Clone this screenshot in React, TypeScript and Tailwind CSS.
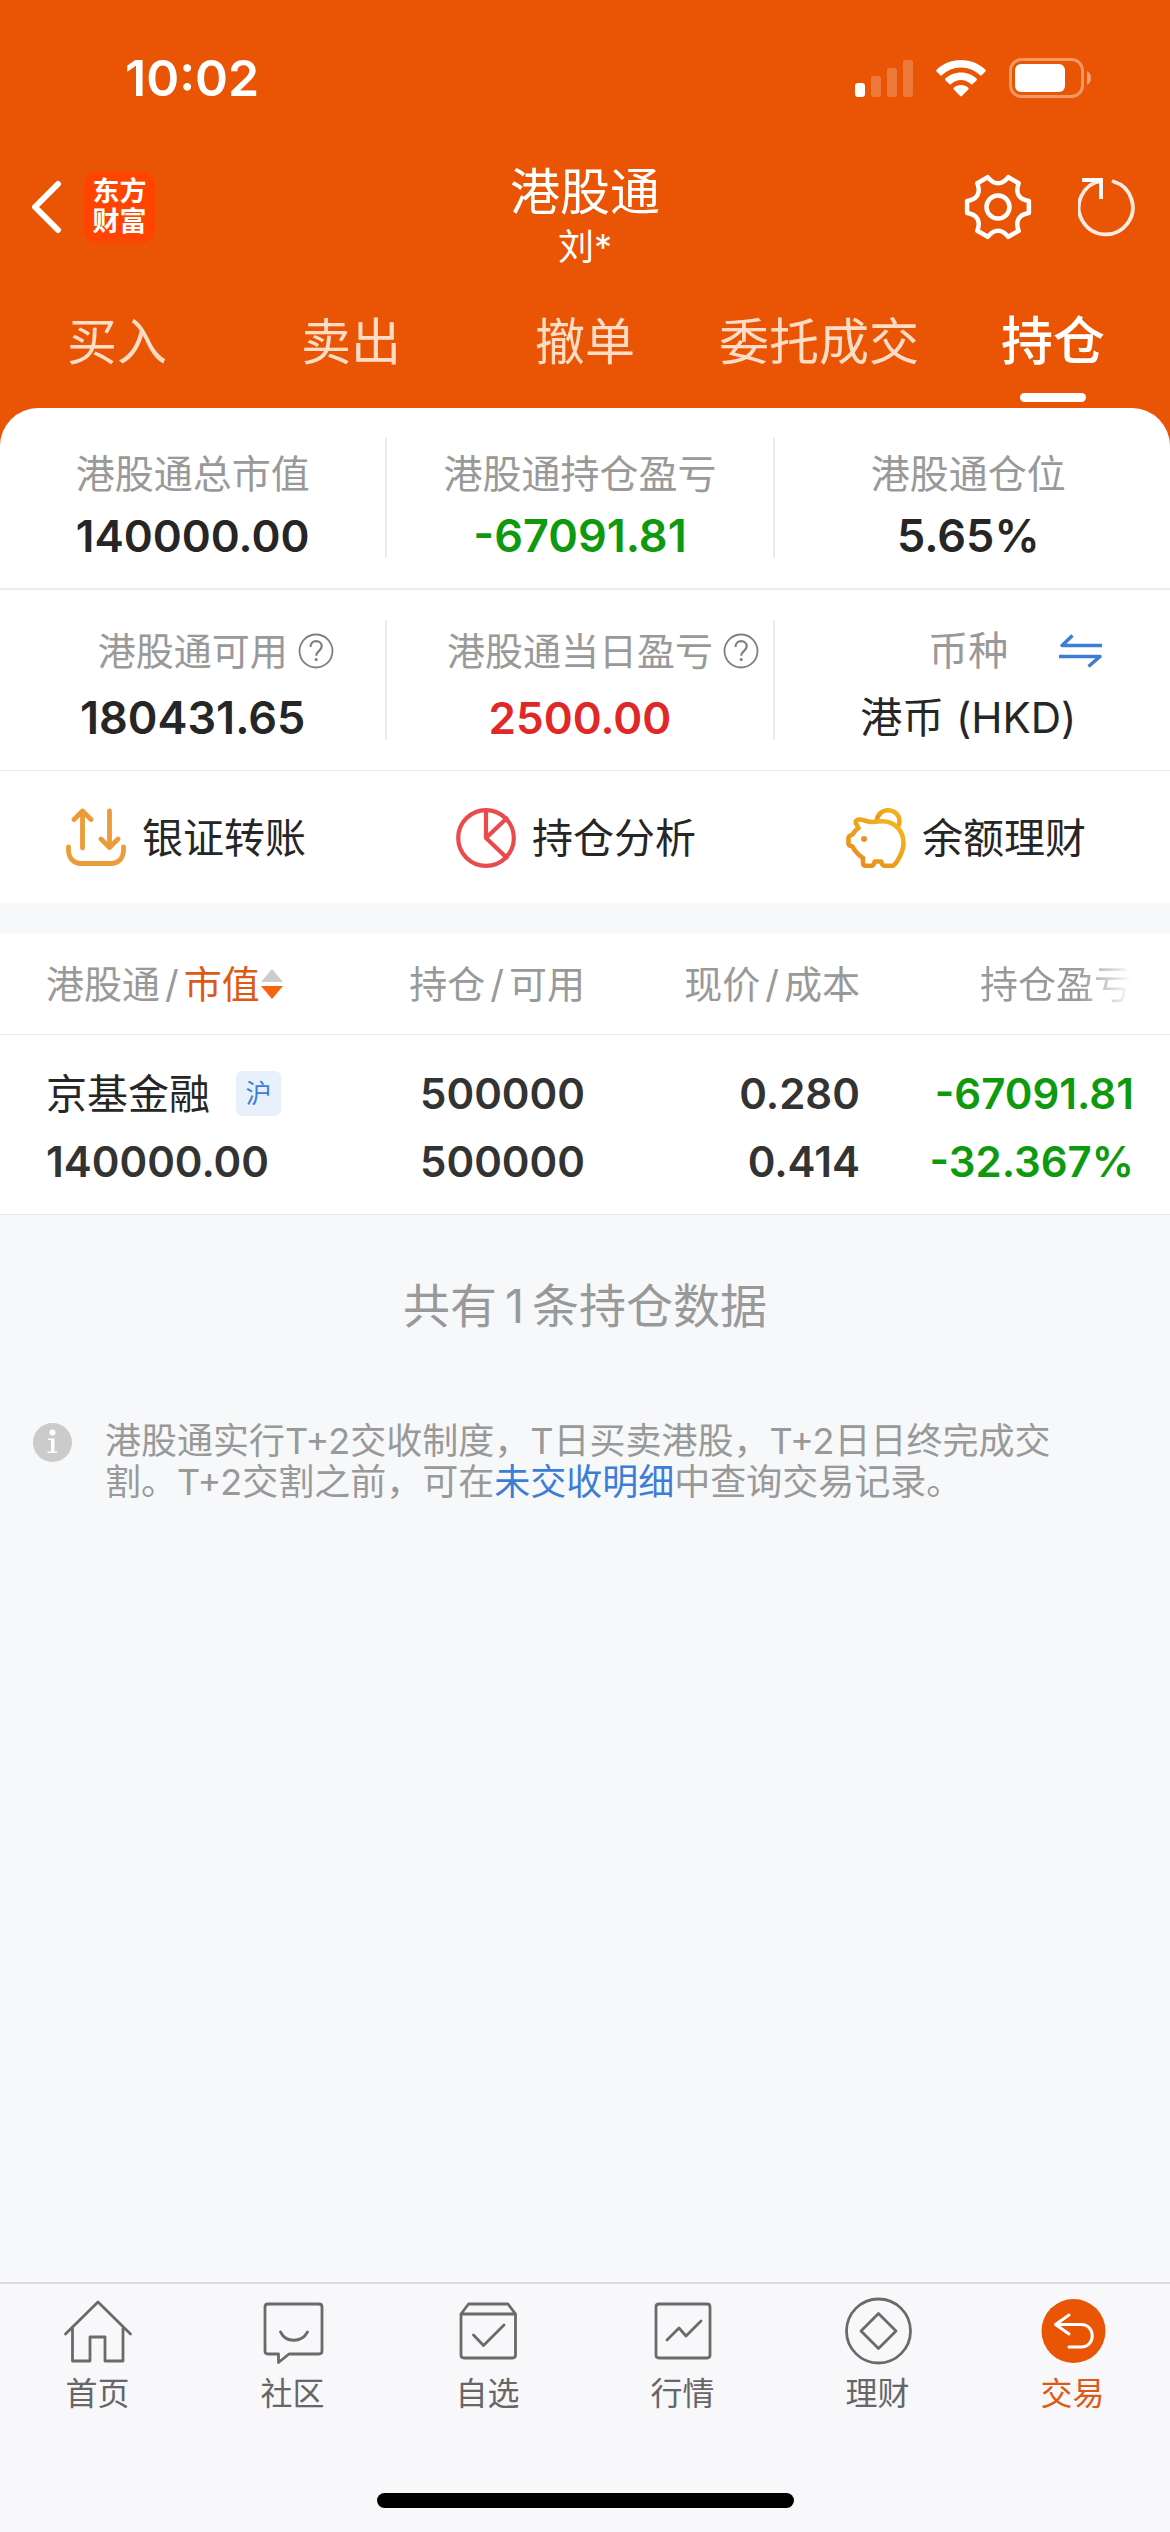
import { useState } from "react";
import type { ReactNode } from "react";

const tabs = ["买入", "卖出", "撤单", "委托成交", "持仓"];

const holdings = [
  {
    name: "京基金融",
    market: "沪",
    value: "140000.00",
    amount: "500000",
    available: "500000",
    price: "0.280",
    cost: "0.414",
    profit: "-67091.81",
    profitRate: "-32.367%",
  },
];

// Six-tooth outline for the settings icon
function gearPath(c: number, outer: number, inner: number) {
  const at = (deg: number, r: number) => {
    const a = (deg * Math.PI) / 180;
    return `${(c + r * Math.cos(a)).toFixed(1)} ${(c + r * Math.sin(a)).toFixed(1)}`;
  };
  let d = `M${at(-11, outer)}`;
  for (let i = 0; i < 6; i++) {
    const t = i * 60;
    d += `L${at(t - 11, outer)}L${at(t + 11, outer)}C${at(t + 20, inner)} ${at(t + 40, inner)} ${at(t + 49, outer)}`;
  }
  return d + "Z";
}

function StatusBar() {
  return (
    <div className="flex h-[156px] items-center justify-between pl-[125px] pr-[78px]">
      <span className="text-[50px] font-semibold leading-[60px]">10:02</span>
      <div className="flex items-center gap-[23px]">
        <svg width="58" height="38" viewBox="0 0 58 38" fill="#fff">
          <rect x="0" y="24" width="10" height="14" rx="3" />
          <g opacity="0.22">
            <rect x="16" y="17" width="10" height="21" rx="3" />
            <rect x="32" y="9" width="10" height="29" rx="3" />
            <rect x="48" y="1" width="10" height="37" rx="3" />
          </g>
        </svg>
        <svg width="50" height="38" viewBox="0 0 50 38" fill="#fff">
          <path d="M25 1C15.500 1 6.800 4.700 .6 10.700c-.5.500-.5 1.200 0 1.700l3.700 3.800c.5.500 1.200.5 1.700 0C11 11.400 17.700 8.500 25 8.500s14 2.900 19 7.700c.5.500 1.200.5 1.700 0l3.700-3.800c.5-.5.5-1.200 0-1.700C43.200 4.700 34.500 1 25 1Z" />
          <path d="M25 13.500c-6 0-11.500 2.300-15.600 6.100-.5.500-.5 1.200 0 1.700l3.800 3.800c.5.500 1.200.5 1.700.1C17.600 22.700 21.100 21 25 21s7.400 1.700 10.100 4.200c.5.400 1.200.4 1.700-.1l3.800-3.800c.5-.5.5-1.200 0-1.700C36.500 15.800 31 13.500 25 13.500Z" />
          <path d="M25 26c-2.800 0-5.300 1-7.200 2.700-.5.500-.5 1.200 0 1.700l6.400 6.600c.5.500 1.200.5 1.700 0l6.400-6.600c.5-.5.5-1.200 0-1.700C30.300 27 27.800 26 25 26Z" />
        </svg>
        <svg width="83" height="40" viewBox="0 0 83 40">
          <rect x="1.500" y="1.500" width="72" height="37" rx="11" fill="none" stroke="#fff" strokeOpacity="0.4" strokeWidth="3" />
          <rect x="6" y="6" width="50" height="28" rx="6" fill="#fff" />
          <path d="M78 13c2.500 1.200 4 4 4 7s-1.500 5.800-4 7V13Z" fill="#fff" fillOpacity="0.45" />
        </svg>
      </div>
    </div>
  );
}

function TitleBar() {
  return (
    <div className="grid grid-cols-[1fr_auto_1fr] items-start">
      <div className="flex h-[102px] items-center gap-[22px] pl-[31px]">
        <button aria-label="返回">
          <svg width="31" height="54" viewBox="0 0 31 54" fill="none" stroke="#fff" strokeWidth="6" strokeLinecap="round" strokeLinejoin="round">
            <path d="M27 4 4 27l23 23" />
          </svg>
        </button>
        <div className="flex h-[71px] w-[71px] flex-col items-center justify-center rounded-[14px] bg-[#ff4400] text-[27px] font-bold leading-[30px]">
          <span>东方</span>
          <span>财富</span>
        </div>
      </div>
      <div className="flex flex-col items-center pt-2">
        <h1 className="text-[50px] leading-[56px]">港股通</h1>
        <span className="text-[36px] leading-[54px]">刘*</span>
      </div>
      <div className="flex h-[102px] items-center justify-end gap-[46px] pr-[32px]">
        <button aria-label="设置">
          <svg width="68" height="68" viewBox="0 0 68 68" fill="none" stroke="#fff" strokeWidth="4.500" strokeLinejoin="round">
            <path d={gearPath(34, 31.5, 22)} />
            <circle cx="34" cy="34" r="11.500" />
          </svg>
        </button>
        <button aria-label="刷新">
          <svg width="60" height="60" viewBox="0 0 60 60" fill="none" stroke="#fff" strokeWidth="3.800" strokeLinecap="round">
            <path d="M35.500 4.500A27 27 0 1 1 23 3.800" strokeOpacity="0.88" />
            <path d="M6 3h17v17" strokeLinecap="square" />
          </svg>
        </button>
      </div>
    </div>
  );
}

function TradeTabs() {
  const [active, setActive] = useState("持仓");
  return (
    <nav className="grid grid-cols-5">
      {tabs.map((tab) => (
        <button
          key={tab}
          onClick={() => setActive(tab)}
          className="flex flex-col items-center gap-[21px] whitespace-nowrap pb-[6px] pt-[38px]"
        >
          <span
            className={
              tab === active
                ? "text-[52px] font-medium leading-[60px]"
                : "text-[50px] leading-[60px] text-[#fedcc6]"
            }
          >
            {tab}
          </span>
          <span className={tab === active ? "h-[9px] w-[66px] rounded-full bg-white" : "h-[9px] w-[66px]"} />
        </button>
      ))}
    </nav>
  );
}

function HelpButton() {
  return (
    <button aria-label="说明" className="ml-[10px] justify-self-start">
      <svg width="36" height="36" viewBox="0 0 36 36" fill="none" stroke="#808080" strokeWidth="1.800">
        <circle cx="18" cy="18" r="16.500" />
        <path d="M12.500 14c0-3.600 2.300-5.900 5.600-5.900 3.200 0 5.600 2 5.600 5.100 0 4.500-5.500 4.800-5.500 9.600" strokeWidth="2.200" />
        <circle cx="18.200" cy="26.500" r="1.600" fill="#808080" stroke="none" />
      </svg>
    </button>
  );
}

function Stat({ label, value, labelStyle, valueStyle, extra, last }: {
  label: string;
  value: string;
  labelStyle: string;
  valueStyle: string;
  extra?: ReactNode;
  last?: boolean;
}) {
  return (
    <div className={last ? "h-[120px]" : "h-[120px] border-r-2 border-[#ebebeb]"}>
      {/* equal side tracks keep the label centred with or without an icon */}
      <div className={`grid grid-cols-[1fr_auto_1fr] items-center whitespace-nowrap leading-[60px] text-[#999] ${labelStyle}`}>
        <span className="col-start-2">{label}</span>
        {extra}
      </div>
      <p className={`text-center leading-[52px] ${valueStyle}`}>{value}</p>
    </div>
  );
}

const topLabel = "h-[72px] text-[39px]";
const subLabel = "mb-[11px] h-[61px] text-[38px]";

function Summary() {
  return (
    <section className="rounded-t-[38px] bg-white">
      <div className="grid grid-cols-3 border-b-2 border-[#ebebeb] pb-[30px] pr-2 pt-[30px]">
        <Stat label="港股通总市值" value="140000.00" labelStyle={topLabel} valueStyle="text-[44px] font-semibold text-[#262626]" />
        <Stat label="港股通持仓盈亏" value="-67091.81" labelStyle={topLabel} valueStyle="text-[45px] font-semibold text-[#0e990e]" />
        <Stat label="港股通仓位" value="5.65%" labelStyle={topLabel} valueStyle="text-[45px] font-semibold text-[#262626]" last />
      </div>
      <div className="grid grid-cols-3 border-b border-[#ebebeb] pb-[30px] pr-2 pt-[30px]">
        <Stat label="港股通可用" value="180431.65" labelStyle={subLabel} valueStyle="text-[45px] font-semibold text-[#262626]" extra={<HelpButton />} />
        <Stat label="港股通当日盈亏" value="2500.00" labelStyle={subLabel} valueStyle="text-[44px] font-semibold text-[#e12828]" extra={<HelpButton />} />
        <Stat
          label="币种"
          value="港币 (HKD)"
          labelStyle="mb-[11px] h-[61px] text-[40px]"
          valueStyle="text-[42px] text-[#262626]"
          last
          extra={
            <button aria-label="切换币种" className="ml-[51px] justify-self-start">
              <svg width="44" height="34" viewBox="0 0 44 34" fill="none" stroke="#3c7dd6" strokeWidth="3.500">
                <path d="M43 11.500H3L13.500 1.500M0 22.500h41L29.500 32.500" strokeLinejoin="round" />
              </svg>
            </button>
          }
        />
      </div>
    </section>
  );
}

const actions = [
  {
    label: "银证转账",
    icon: (
      <g stroke="#eb9c38" strokeWidth="4.800">
        <path d="M16.500 40V3M8 11.500 16.500 3l8.500 8.500M43.500 3v36.500M35 31l8.500 8.500L52 31" />
        <path d="M2.500 39v3c0 8 5 13.500 13 13.500h29c8 0 13-5.500 13-13.500v-3" />
      </g>
    ),
  },
  {
    label: "持仓分析",
    icon: (
      <g stroke="#ea4a4c" strokeWidth="4.200">
        <circle cx="30" cy="30" r="27.800" />
        <path d="M30 2.500V30l20.500-19.500M30 30l20.500 19.500" />
      </g>
    ),
  },
  {
    label: "余额理财",
    icon: (
      <>
        <linearGradient id="pig" x1="1" y1="0" x2="0" y2="1">
          <stop offset="0" stopColor="#f5b81c" />
          <stop offset="1" stopColor="#e68a1e" />
        </linearGradient>
        <g stroke="url(#pig)" strokeWidth="4.600">
          <path d="M31 13C31 6.500 36 2.300 42 2.300c6.500 0 11.500 4.700 11.500 10.700 0 2-.5 4-1.500 5.500" />
          <path d="M10 15.500c-.8-2.500.5-4 3-4 5 0 8 2.500 13 2.500 3-.5 6-.8 10-.8C49 13.200 57.500 23 57.500 35c0 7-3 13-6.500 18.500L48.500 56.500c-.7 1-1.500 1.300-2.500 1.300h-7c-1.500 0-2.500-.7-3-2l-.8-2.300h-6.500l-.8 2.300c-.5 1.300-1.500 2-3 2H20c-2 0-3-1-3-3v-4.800C12.500 47 9 43.500 6.500 38.500l-2.200-.8c-1.200-.4-1.800-1.200-1.800-2.500v-5c0-1.300.6-2.200 1.800-2.700L6.500 26.500C8 23.500 10 21.500 12.500 20Z" />
        </g>
        <circle cx="18" cy="31" r="3" fill="#e9942a" />
      </>
    ),
  },
];

function Actions() {
  return (
    <section className="grid grid-cols-3 bg-white">
      {actions.map((a) => (
        <button key={a.label} className="flex h-[132px] items-center gap-[16px] whitespace-nowrap pt-[2px] pl-[66px]">
          <svg width="60" height="60" viewBox="0 0 60 60" fill="none" strokeLinecap="round" strokeLinejoin="round">
            {a.icon}
          </svg>
          <span className="text-[41px] leading-[60px] text-[#262626]">{a.label}</span>
        </button>
      ))}
    </section>
  );
}

function Slash() {
  return <span className="px-[5px]">/</span>;
}

function Holdings() {
  return (
    <table className="mt-[30px] w-full table-fixed border-collapse bg-white">
      <colgroup>
        <col className="w-[30%]" />
        <col className="w-[20%]" />
        <col className="w-[23.5%]" />
        <col className="w-[26.5%]" />
      </colgroup>
      <thead>
        <tr className="h-[101px] whitespace-nowrap border-b border-[#ebebeb] text-[38px] leading-[60px] text-[#999]">
          <th className="pl-[46px] pt-[2px] text-left font-normal">
            <button className="flex items-center">
              港股通
              <Slash />
              <span className="text-[#de5a12]">市值</span>
              <svg width="24" height="32" viewBox="0 0 24 32">
                <path d="M12 1 23 14H1Z" fill="#cdcdcd" />
                <path d="M12 31 1 18h22Z" fill="#f8630f" />
              </svg>
            </button>
          </th>
          <th className="pt-[2px] text-right font-normal">持仓<Slash />可用</th>
          <th className="pt-[2px] text-right font-normal">现价<Slash />成本</th>
          <th className="pr-[38px] pt-[2px] text-right font-normal">
            <span className="bg-linear-to-r from-[#999] from-65% to-white bg-clip-text text-transparent">持仓盈亏</span>
          </th>
        </tr>
      </thead>
      <tbody>
        {holdings.map((h) => (
          <tr key={h.name} className="whitespace-nowrap border-b border-[#e9e9ec] text-[42px] font-semibold leading-[68px] text-[#333]">
            <td className="pb-[18px] pl-[46px] pt-[25px]">
              <div className="flex h-[68px] items-center gap-[26px]">
                <span className="text-[41px] font-normal text-[#262626]">{h.name}</span>
                <span className="flex h-[45px] w-[45px] items-center justify-center rounded-[6px] bg-[#e8f1fb] text-[26px] font-normal leading-[45px] text-[#3c7dd6]">
                  {h.market}
                </span>
              </div>
              <div>{h.value}</div>
            </td>
            <td className="pb-[18px] pt-[25px] text-right">
              <div>{h.amount}</div>
              <div>{h.available}</div>
            </td>
            <td className="pb-[18px] pt-[25px] text-right">
              <div>{h.price}</div>
              <div>{h.cost}</div>
            </td>
            <td className="pb-[18px] pr-[36px] pt-[25px] text-right text-[#0e990e]">
              <div>{h.profit}</div>
              <div>{h.profitRate}</div>
            </td>
          </tr>
        ))}
      </tbody>
    </table>
  );
}

function Notice() {
  return (
    <section className="text-[#999]">
      <p className="pt-[61px] text-center text-[47px] leading-[60px]">
        共有<span className="px-[8px]">{holdings.length}</span>条持仓数据
      </p>
      <div className="flex items-start gap-[33px] pl-[33px] pr-[100px] pt-[85px]">
        <svg className="mt-[2px] shrink-0" width="39" height="39" viewBox="0 0 39 39">
          <circle cx="19.500" cy="19.500" r="19.500" fill="#cbcbcb" />
          <circle cx="19.500" cy="9.500" r="3" fill="#fff" />
          <path d="M15 15.500h6.500v13H24V30h-9.500v-1.500H18V17h-3Z" fill="#fff" />
        </svg>
        <p className="text-[36px] leading-[41px]">
          港股通实行T+2交收制度，T日买卖港股，T+2日日终完成交割。T+2交割之前，可在
          <a href="#unsettled" className="text-[#3c7dd6]">未交收明细</a>
          中查询交易记录。
        </p>
      </div>
    </section>
  );
}

const navItems = [
  {
    label: "首页",
    icon: <path d="M2.500 38 35 6l32.500 32M9.500 32v33H27V41h15v24h18V32" />,
  },
  {
    label: "社区",
    icon: <path d="M10 8h51q3 0 3 3v44q0 3-3 3H31l-10.500 8.500V58H10q-3 0-3-3V11q0-3 3-3ZM22.500 36c5.500 11 21 11 27 0" />,
  },
  {
    label: "自选",
    icon: <path d="M8 18h54.500v41q0 3-3 3H11q-3 0-3-3ZM8 18 15.500 8H55l7.500 10M20.500 39l10 10.500L51 29" />,
  },
  {
    label: "行情",
    icon: <path d="M11 8h48q3 0 3 3v48q0 3-3 3H11q-3 0-3-3V11q0-3 3-3ZM19 44l12-12 7 8 15-15" />,
  },
  {
    label: "理财",
    icon: (
      <>
        <circle cx="35.500" cy="35" r="32" />
        <path d="M35.500 17.500 53 35 35.500 52.500 18 35Z" />
      </>
    ),
  },
  {
    label: "交易",
    active: true,
    icon: (
      <>
        <circle cx="35.500" cy="35" r="32" fill="#e95504" stroke="none" />
        <path d="M31 19 17.500 28.500 31 38M18 28.500h25c15 0 15 22.500 0 22.500H31" stroke="#fff" strokeWidth="3" />
      </>
    ),
  },
];

function BottomNav() {
  return (
    <footer className="mt-auto border-t-2 border-[#dcdcde] bg-[#f8f8fa]">
      <nav className="grid grid-cols-6 pt-[12px]">
        {navItems.map((item) => (
          <a
            key={item.label}
            href="#"
            className={
              item.active
                ? "flex flex-col items-center gap-[6px] text-[#de5a12]"
                : "flex flex-col items-center gap-[6px] text-[#666]"
            }
          >
            <svg width="70" height="70" viewBox="0 0 70 70" fill="none" stroke="#6a6a6a" strokeWidth="2.800" strokeLinecap="round" strokeLinejoin="round">
              {item.icon}
            </svg>
            <span className="text-[32px] leading-[44px]">{item.label}</span>
          </a>
        ))}
      </nav>
      <div className="flex justify-center pb-[24px] pt-[77px]">
        <div className="h-[15px] w-[417px] rounded-full bg-black" />
      </div>
    </footer>
  );
}

export default function App() {
  return (
    <div className="flex min-h-screen flex-col bg-[#f7f8fa] font-['Inter','Noto_Sans_CJK_SC',sans-serif]">
      <div className="bg-[#e95504]">
        <header className="text-white">
          <StatusBar />
          <TitleBar />
          <TradeTabs />
        </header>
        <Summary />
      </div>
      <Actions />
      <Holdings />
      <Notice />
      <BottomNav />
    </div>
  );
}
